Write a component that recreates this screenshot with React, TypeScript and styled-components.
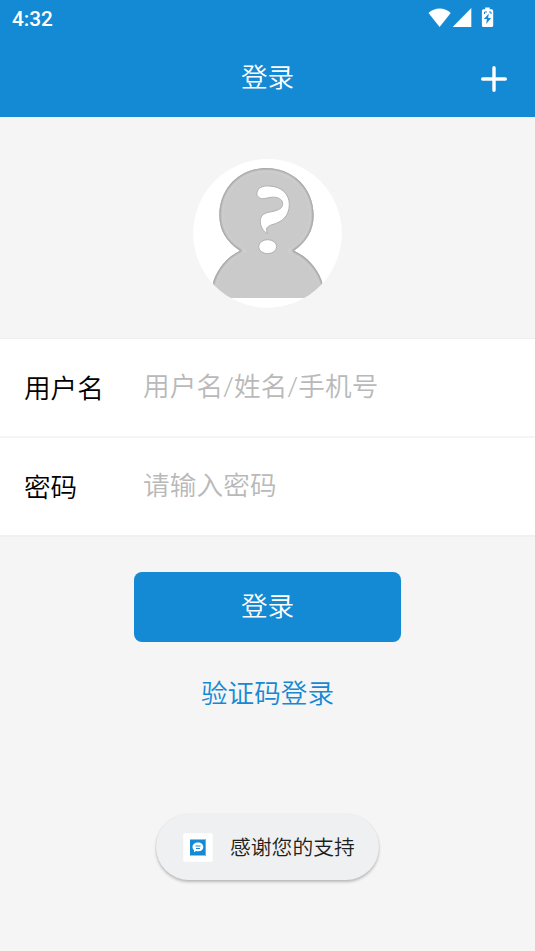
import React from "react";
import styled, { createGlobalStyle } from "styled-components";

const BLUE = "#1489d4";

const GlobalStyle = createGlobalStyle`
  * { box-sizing: border-box; }
  body { margin: 0; background: #f5f5f5; }
`;

const Page = styled.main`
  width: 535px;
  height: 951px;
  display: flex;
  flex-direction: column;
  align-items: center;
  overflow: hidden;
  background: #f5f5f5;
  font-family: Roboto, "Noto Sans CJK SC DemiLight", "Noto Sans CJK SC", sans-serif;
  font-size: 26.6px;
  font-weight: 350;
`;

const Header = styled.header`
  width: 100%;
  height: 117px;
  flex: none;
  background: ${BLUE};
  color: #fff;
`;

const StatusBar = styled.div`
  height: 38px;
  padding: 0 40px 0 12px;
  display: flex;
  align-items: center;
  justify-content: space-between;
  font-size: 20.8px;
  font-weight: 500;
`;

const StatusIcons = styled.svg`
  width: 67px;
  height: 22px;
  margin-bottom: 4px;
`;

const TitleBar = styled.div`
  height: 79px;
  display: grid;
  grid-template-columns: 80px 1fr 80px;
  align-items: center;
  text-align: center;
`;

const Title = styled.h1`
  grid-column: 2;
  margin: 0;
  font: inherit;
  line-height: 40px;
`;

const AddButton = styled.button`
  justify-self: end;
  width: 26px;
  height: 26px;
  margin: 3px 28px 0 0;
  padding: 0;
  border: 0;
  background: none;
  svg { display: block; }
`;

const AvatarArea = styled.section`
  width: 100%;
  height: 221px;
  padding-top: 42px;
  flex: none;
  display: flex;
  justify-content: center;
`;

const Avatar = styled.svg`
  width: 149px;
  height: 149px;
`;

const Form = styled.form`
  width: 100%;
  flex: none;
  border-top: 1px solid #efefef;
`;

const Field = styled.label<{ $last?: boolean }>`
  height: 99px;
  display: grid;
  grid-template-columns: 119px 1fr;
  align-items: center;
  padding: 0 24px;
  background: #fff;
  border-bottom: 2px solid ${(p) => (p.$last ? "#f0f0f0" : "#f5f5f5")};
`;

const FieldName = styled.span`
  color: #000;
  line-height: 40px;
  padding-top: 3px;
`;

const Input = styled.input`
  min-width: 0;
  height: 44px;
  padding: 0 0 2px;
  border: 0;
  outline: 0;
  background: none;
  font: inherit;
  letter-spacing: 0.15px;
  &::placeholder { color: #b9b9b9; opacity: 1; }
`;

const LoginButton = styled.button`
  width: 267px;
  height: 70px;
  flex: none;
  margin-top: 35px;
  padding: 0 0 5px;
  border: 0;
  border-radius: 8px;
  background: ${BLUE};
  color: #fff;
  font: inherit;
`;

const CodeLink = styled.a`
  margin-top: 32px;
  line-height: 40px;
  color: ${BLUE};
`;

const Toast = styled.div`
  width: 223px;
  height: 66px;
  flex: none;
  margin-top: 100px;
  padding-left: 27px;
  display: flex;
  align-items: center;
  gap: 17px;
  border-radius: 33px;
  background: #eff0f2;
  color: #1d1e20;
  font-size: 20.8px;
  box-shadow: 0 2px 3px rgba(0, 0, 0, 0.24), 0 0 2px rgba(0, 0, 0, 0.06);
`;

const AppIcon = styled.svg`
  width: 30px;
  height: 29px;
  flex: none;
`;

const ToastText = styled.span`
  white-space: nowrap;
  padding-bottom: 2px;
`;

export default function App() {
  return (
    <Page>
      <GlobalStyle />
      <Header>
        <StatusBar>
          <span>4:32</span>
          <StatusIcons viewBox="428 6 67 22" fill="#fff">
            <path d="M428.500 13C434.500 7 445 7 450.700 13L439.600 27Z" />
            <path d="M452.700 27L471.300 8V27Z" />
            <path d="M483.500 9.300h1.700V7.500h4.500v1.800h1.900q1.600 0 1.600 1.600V25.400q0 1.600-1.600 1.600h-8.100q-1.600 0-1.600-1.600V10.900q0-1.600 1.600-1.600Z" />
            <path d="M488.900 13.500l-5 5.500h3l-.7 5 4.900-6h-3Z" fill={BLUE} />
            <path d="M484.500 14v-2h2.500M489 12h2v2" fill="none" stroke={BLUE} strokeWidth="1" />
          </StatusIcons>
        </StatusBar>
        <TitleBar>
          <Title>登录</Title>
          <AddButton type="button" aria-label="添加">
            <svg width="26" height="26" viewBox="0 0 26 26" stroke="#fff" strokeWidth="3.4" strokeLinecap="round">
              <path d="M13 1.700V24.300M1.700 13H24.300" />
            </svg>
          </AddButton>
        </TitleBar>
      </Header>
      <AvatarArea>
        <Avatar viewBox="24 27 447 447">
          <defs>
            <clipPath id="disc">
              <circle cx="247.500" cy="250" r="223" />
            </clipPath>
            <clipPath id="figure">
              <path d="M165 302C124 277 103 240 103 196C103 112 167 54 244 54C322 54 386 113 386 196C386 240 365 277 327 302C370 322 402 360 413 402V444H83V402C94 360 124 322 165 302Z" />
            </clipPath>
            <filter id="soft" x="-10%" y="-10%" width="120%" height="120%">
              <feGaussianBlur stdDeviation="3" />
            </filter>
          </defs>
          <circle cx="247.500" cy="250" r="223" fill="#fff" />
          <g clipPath="url(#disc)">
            <g clipPath="url(#figure)">
              <path fill="#cacaca" d="M60 40H430V444H60Z" />
              <path
                d="M83 402C94 360 124 322 165 302C124 277 103 240 103 196C103 112 167 54 244 54C322 54 386 113 386 196C386 240 365 277 327 302C370 322 402 360 413 402"
                fill="none"
                stroke="#d4d4d4"
                strokeWidth="19"
                filter="url(#soft)"
              />
              <path
                d="M83 402C94 360 124 322 165 302C124 277 103 240 103 196C103 112 167 54 244 54C322 54 386 113 386 196C386 240 365 277 327 302C370 322 402 360 413 402"
                fill="none"
                stroke="#999"
                strokeWidth="8"
                filter="url(#soft)"
              />
            </g>
            <path
              d="M216 128C219 113 233 107 250 108C290 108 313 133 313 163C313 198 291 217 261 224C246 229 240 236 248 251C233 244 225 226 226 212C227 194 240 188 260 185C282 181 292 174 293 163C295 148 277 139 258 142C239 145 233 149 223 143C217 140 215 135 216 128Z"
              fill="#fff"
              stroke="#b0b0b0"
              strokeWidth="3"
            />
            <ellipse cx="248" cy="290" rx="27" ry="21" fill="#fff" stroke="#b0b0b0" strokeWidth="3" />
          </g>
        </Avatar>
      </AvatarArea>
      <Form>
        <Field>
          <FieldName>用户名</FieldName>
          <Input placeholder="用户名/姓名/手机号" />
        </Field>
        <Field $last>
          <FieldName>密码</FieldName>
          <Input type="password" placeholder="请输入密码" />
        </Field>
      </Form>
      <LoginButton type="button">登录</LoginButton>
      <CodeLink>验证码登录</CodeLink>
      <Toast role="status">
        <AppIcon viewBox="0 0 30 29">
          <rect x=".3" y=".3" width="29.400" height="28.400" rx="1.500" fill="#fff" />
          <path d="M7 6.500H23V22.500H7Z" fill={BLUE} />
          <path d="M22 6.500h1v16h-1z" fill="#68aee1" />
          <path d="M15 9.500c3.200 0 5.300 1.900 5.300 4.400S18.200 18.300 15 18.300c-.8 0-1.500-.1-2.100-.3L11 19.300v-2.200c-1-.8-1.500-1.900-1.500-3.200 0-2.500 2.300-4.400 5.500-4.400Z" fill="#fff" />
          <path d="M12.500 13h5M13 15.500h4" stroke={BLUE} strokeWidth="1" />
        </AppIcon>
        <ToastText>感谢您的支持</ToastText>
      </Toast>
    </Page>
  );
}
